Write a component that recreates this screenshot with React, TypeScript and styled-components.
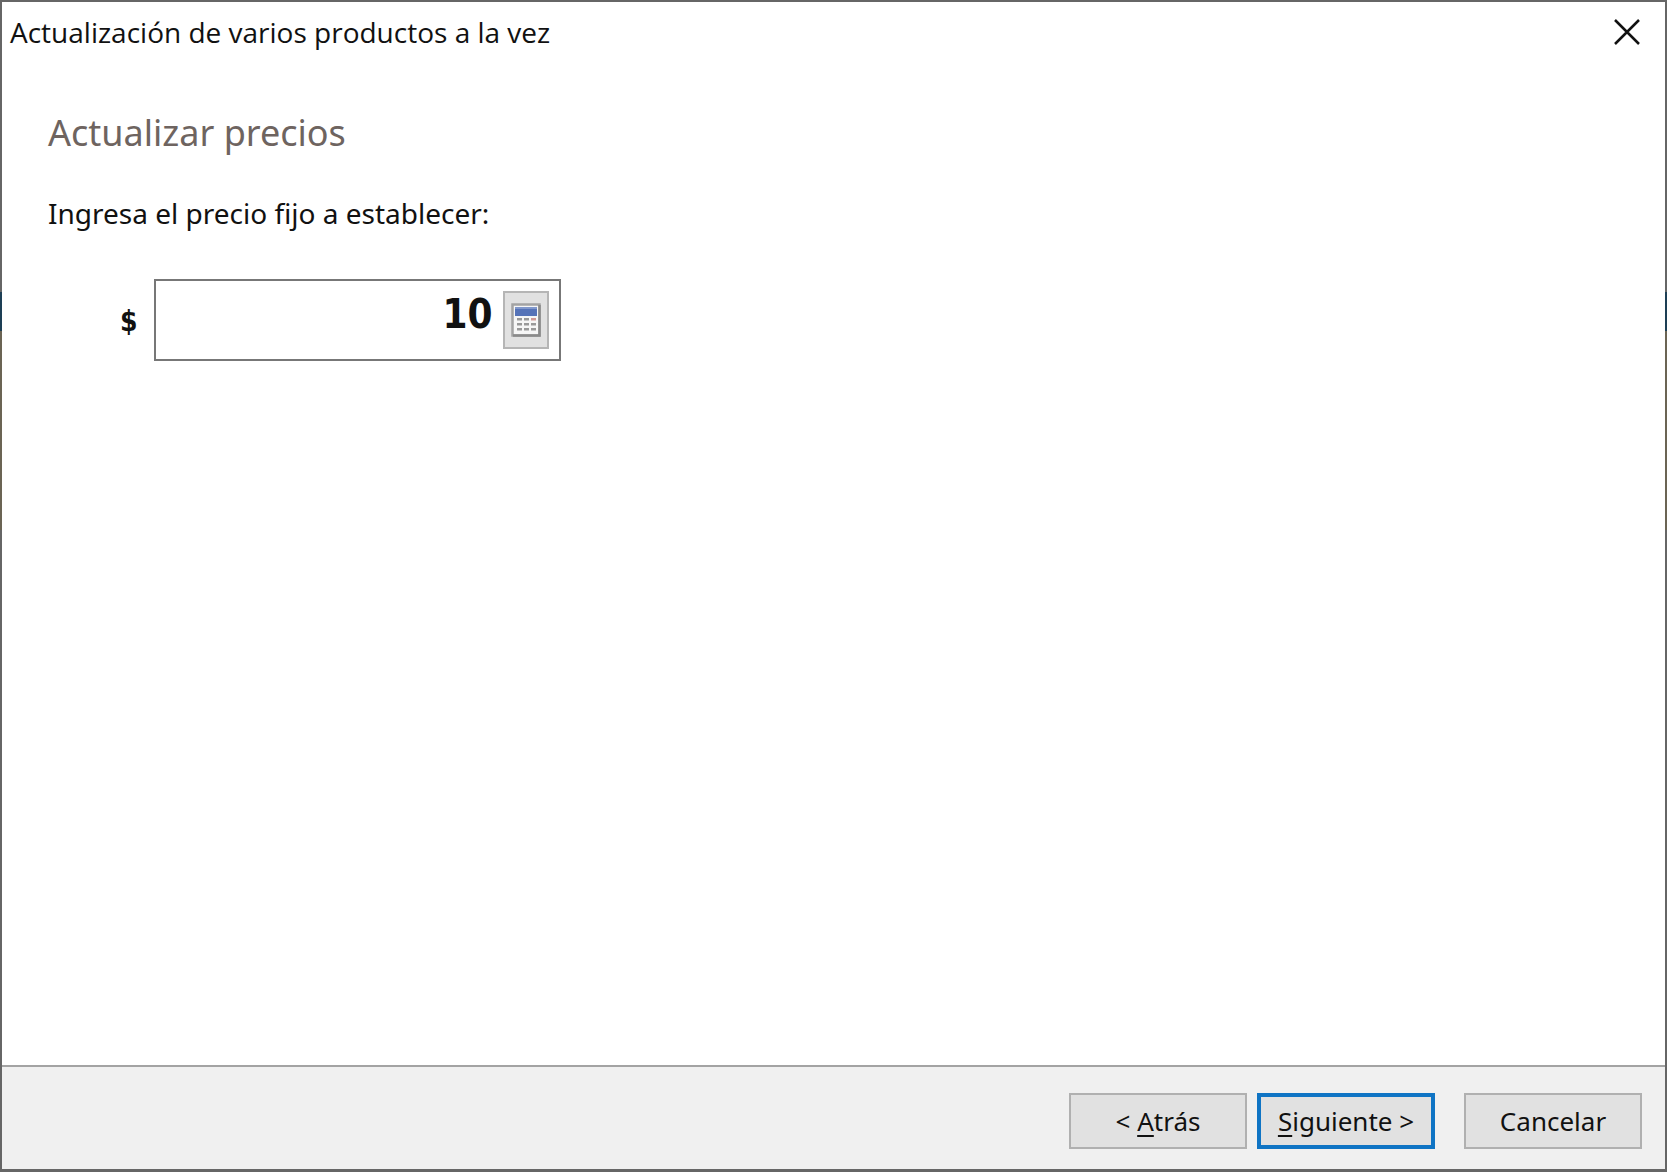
import React, { useState } from "react";
import styled, { createGlobalStyle } from "styled-components";

const GlobalStyle = createGlobalStyle`
  *, *::before, *::after { box-sizing: border-box; }
  body { margin: 0; background: #666; }
`;

const uiFont = '"Noto Sans", "Open Sans", sans-serif';

const Window = styled.main`
  display: flex;
  flex-direction: column;
  min-height: 100vh;
  padding: 2px 2px 3px;
  background: linear-gradient(
    #666 292px,
    #1d3f55 292px,
    #1d3f55 331px,
    #6b6454 331px,
    #6b6454 530px,
    #666 530px
  );
  font-family: ${uiFont};
  color: #111;
`;

const TitleBar = styled.header`
  display: flex;
  align-items: center;
  justify-content: space-between;
  height: 60px;
  padding: 0 24px 0 8px;
  background: #fff;
`;

const Title = styled.h1`
  margin: 0;
  font-family: "Open Sans", "Noto Sans", sans-serif;
  font-size: 28px;
  font-weight: 400;
  line-height: 40px;
`;

const CloseButton = styled.button`
  display: grid;
  place-items: center;
  padding: 0;
  border: 0;
  background: none;
  color: #111;
`;

const Body = styled.section`
  flex: 1;
  padding: 45px 46px;
  background: #fff;
`;

const Heading = styled.h2`
  margin: 0 0 30px;
  font-size: 36px;
  font-weight: 400;
  line-height: 52px;
  color: #6e6460;
`;

const Label = styled.label`
  display: block;
  font-size: 28px;
  line-height: 48px;
`;

const PriceRow = styled.div`
  display: flex;
  align-items: center;
  gap: 16px;
  padding: 42px 0 0 72px;
  font-family: "DejaVu Sans Condensed", "DejaVu Sans", sans-serif;
  font-weight: 700;
`;

const Currency = styled.span`
  padding-top: 4px;
  font-size: 28px;
  line-height: 40px;
`;

const PriceBox = styled.div`
  display: flex;
  align-items: center;
  gap: 10px;
  width: 407px;
  height: 82px;
  padding: 10px;
  border: 2px solid #777;
`;

const PriceInput = styled.input`
  flex: 1;
  min-width: 0;
  height: 58px;
  padding: 0 0 12px;
  border: 0;
  outline: 0;
  background: none;
  color: #111;
  font: inherit;
  font-size: 40px;
  text-align: right;
`;

const CalculatorButton = styled.button`
  display: grid;
  place-items: center;
  width: 46px;
  height: 58px;
  padding: 0;
  border: 2px solid #b5b5b5;
  background: #e1e1e1;
`;

const Footer = styled.footer`
  display: flex;
  justify-content: flex-end;
  gap: 10px;
  padding: 26px 23px 20px;
  border-top: 2px solid #a3a3a3;
  background: #f0f0f0;
`;

const WizardButton = styled.button<{ $primary?: boolean; $apart?: boolean }>`
  width: 178px;
  height: 56px;
  margin-left: ${(p) => (p.$apart ? "19px" : "0")};
  padding: 0;
  border: ${(p) => (p.$primary ? "4px solid #0f74c4" : "2px solid #b0b0b0")};
  background: #e1e1e1;
  color: #111;
  font-family: ${uiFont};
  font-size: 26px;
  line-height: 40px;
`;

const Mnemonic = styled.u`
  text-decoration-thickness: 2px;
  text-underline-offset: 4px;
`;

const CloseIcon = () => (
  <svg width="28" height="28" viewBox="0 0 28 28" aria-hidden="true">
    <path d="M2 2L26 26M26 2L2 26" stroke="currentColor" strokeWidth="2.5" fill="none" />
  </svg>
);

const keyRows = [16, 21, 26];
const keyColumns = [6, 13, 20];

const CalculatorIcon = () => (
  <svg width="30" height="36" viewBox="0 0 30 36" aria-hidden="true">
    <rect x="1.5" y="2.5" width="27" height="31" fill="#f6f6f6" stroke="#a3a3a3" strokeWidth="2.5" />
    <path d="M28.5 3V33.5H2" fill="none" stroke="#8a8a8a" strokeWidth="2.5" />
    <rect x="4" y="5" width="22" height="3" fill="#8198cc" />
    <rect x="4" y="7" width="22" height="7" fill="#5573b8" />
    {keyRows.map((y) =>
      keyColumns.map((x) => (
        <rect key={`${x}-${y}`} x={x} y={y} width="5" height="2.5" fill={y === 16 && x === 20 ? "#d09a96" : "#999"} />
      ))
    )}
  </svg>
);

export default function App() {
  const [price, setPrice] = useState("10");
  return (
    <>
      <GlobalStyle />
      <Window>
        <TitleBar>
          <Title>Actualización de varios productos a la vez</Title>
          <CloseButton type="button" aria-label="Cerrar">
            <CloseIcon />
          </CloseButton>
        </TitleBar>
        <Body>
          <Heading>Actualizar precios</Heading>
          <Label htmlFor="price">Ingresa el precio fijo a establecer:</Label>
          <PriceRow>
            <Currency>$</Currency>
            <PriceBox>
              <PriceInput id="price" inputMode="decimal" value={price} onChange={(e) => setPrice(e.target.value)} />
              <CalculatorButton type="button" aria-label="Calculadora">
                <CalculatorIcon />
              </CalculatorButton>
            </PriceBox>
          </PriceRow>
        </Body>
        <Footer>
          <WizardButton type="button">
            &lt; <Mnemonic>A</Mnemonic>trás
          </WizardButton>
          <WizardButton type="button" $primary>
            <Mnemonic>S</Mnemonic>iguiente &gt;
          </WizardButton>
          <WizardButton type="button" $apart>
            Cancelar
          </WizardButton>
        </Footer>
      </Window>
    </>
  );
}
